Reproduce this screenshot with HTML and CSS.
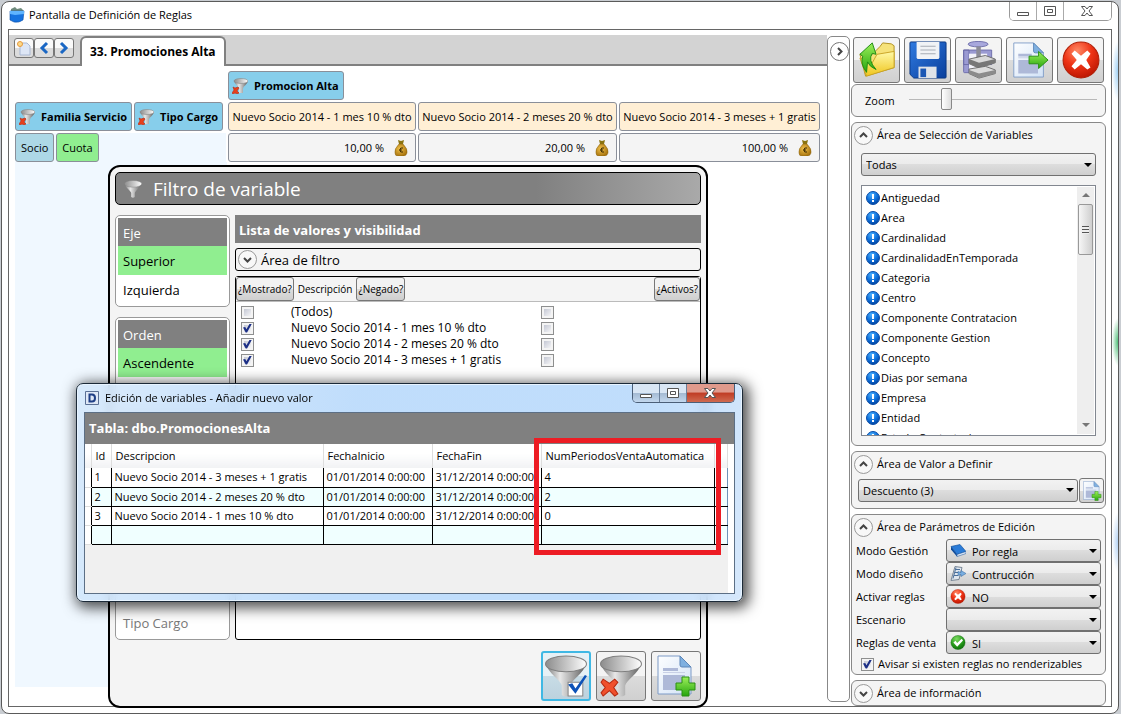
FILE: index.html
```html
<!DOCTYPE html>
<html lang="es">
<head>
  <meta charset="UTF-8">
  <title>Pantalla de Definición de Reglas</title>
  <link rel="stylesheet" href="styles.css">
</head>
<body>
  <!-- shared icons -->
  <svg class="defs" width="0" height="0" aria-hidden="true">
    <defs>
      <linearGradient id="steel" x1="0" x2="1" y1="0" y2="0">
        <stop offset="0" stop-color="#777"/><stop offset=".35" stop-color="#e8e8e8"/>
        <stop offset=".6" stop-color="#b4b4b4"/><stop offset="1" stop-color="#5c5c5c"/>
      </linearGradient>
      <linearGradient id="bowl" x1="0" x2="1" y1="0" y2="0">
        <stop offset="0" stop-color="#8c8c8c"/><stop offset=".6" stop-color="#cfcfcf"/><stop offset="1" stop-color="#fff"/>
      </linearGradient>
      <linearGradient id="blue" x1="0" x2="1" y1="0" y2="1">
        <stop offset="0" stop-color="#2f7ae0"/><stop offset="1" stop-color="#0a3f9c"/>
      </linearGradient>
      <linearGradient id="folder" x1="0" x2="0" y1="0" y2="1">
        <stop offset="0" stop-color="#fff9a8"/><stop offset="1" stop-color="#efc51c"/>
      </linearGradient>
      <linearGradient id="green" x1="0" x2="0" y1="0" y2="1">
        <stop offset="0" stop-color="#9cf05a"/><stop offset="1" stop-color="#27a50d"/>
      </linearGradient>
      <linearGradient id="paper" x1="0" x2="1" y1="0" y2="1">
        <stop offset="0" stop-color="#fdfeff"/><stop offset="1" stop-color="#d2e2f6"/>
      </linearGradient>
      <radialGradient id="red" cx=".4" cy=".25" r=".8">
        <stop offset="0" stop-color="#ff8a66"/><stop offset=".5" stop-color="#ee3315"/><stop offset="1" stop-color="#b81400"/>
      </radialGradient>
      <radialGradient id="ball" cx=".4" cy=".25" r=".8">
        <stop offset="0" stop-color="#4ab0ff"/><stop offset=".6" stop-color="#0a6ad6"/><stop offset="1" stop-color="#043f96"/>
      </radialGradient>
      <radialGradient id="okball" cx=".4" cy=".25" r=".8">
        <stop offset="0" stop-color="#7edc62"/><stop offset=".6" stop-color="#25981a"/><stop offset="1" stop-color="#0c6a08"/>
      </radialGradient>
      <radialGradient id="gold" cx=".4" cy=".4" r=".7">
        <stop offset="0" stop-color="#f0c04a"/><stop offset="1" stop-color="#a06c08"/>
      </radialGradient>
    </defs>

    <symbol id="i-funnel" viewBox="0 0 40 40">
      <path d="M1 9C3 17 15 24 16 29v9q4 3 8 0v-9c1-5 13-12 15-20z" fill="url(#steel)"/>
      <ellipse cx="20" cy="8.500" rx="19.500" ry="7.500" fill="url(#bowl)" stroke="#808080"/>
    </symbol>
    <symbol id="i-cross" viewBox="0 0 18 18">
      <path d="M3 1l6 4 5-4 3 3-4 5 4 6-3 2-5-5-6 5-2-3 4-5-4-5z" fill="#f0502c" stroke="#b62a10"/>
    </symbol>
    <symbol id="i-funnel-x" viewBox="0 0 40 40">
      <use href="#i-funnel"/>
      <use href="#i-cross" x="0" y="22" width="18" height="18"/>
    </symbol>
    <symbol id="i-funnel-x-small" viewBox="0 0 16 16">
      <path d="M2 3c1 4 5 5 5 8v4h4v-4c0-3 4-4 5-8z" fill="url(#steel)"/>
      <ellipse cx="9" cy="3" rx="7" ry="2.500" fill="url(#bowl)" stroke="#888" stroke-width=".6"/>
      <path d="M1 9l2 1 3-1 1 1-2 3 2 2-2 1-2-1-2 1-1-1 2-3z" fill="#e8401c" stroke="#b62a10" stroke-width=".6"/>
    </symbol>
    <symbol id="i-funnel-ok" viewBox="0 0 40 40">
      <use href="#i-funnel"/>
      <path d="M22 26h14v13H22z" fill="#fff" stroke="#888"/>
      <path d="M22 28l4-1 3 5L38 19l2 1-11 17z" fill="#0c52b8"/>
    </symbol>
    <symbol id="i-page" viewBox="0 0 36 40">
      <path d="M1 1h22l11 11v27H1z" fill="url(#paper)" stroke="#7c9ac6"/>
      <path d="M23 1v9q0 2 2 2h9z" fill="#7fb0e0" stroke="#5d86b8"/>
      <path d="M6 13h15v3H6zM6 20h22v15H6z" fill="#aeb9d8"/>
      <path d="M6 17h22v1H6z" fill="#c8d0e6"/>
    </symbol>
    <symbol id="i-page-add" viewBox="0 0 40 42">
      <use href="#i-page" x="1" y="0" width="36" height="40"/>
      <path d="M26 22h7v6h6v7h-6v6h-7v-6h-6v-7h6z" fill="url(#green)" stroke="#2a8f12"/>
    </symbol>
    <symbol id="i-page-go" viewBox="0 0 38 40">
      <use href="#i-page" x="1" y="0" width="34" height="40"/>
      <path d="M18 16h10v-5l10 9-10 9v-5H18z" fill="url(#green)" stroke="#2a8f12"/>
    </symbol>
    <symbol id="i-folder" viewBox="0 0 40 38">
      <path d="M2 13l10-3 2 4 9-9 3-4 9 1 3 2v23l-30 9z" fill="#f6e27a" stroke="#b09020"/>
      <path d="M2 17l7 19 29-9V10L20 13l-5 9z" fill="url(#folder)" stroke="#c9a325"/>
      <path d="M9 32q-7-9-4-17l-3-2L15 1l4 12-4-1q-5 7 4 17-7-3-9-8z" fill="url(#green)" stroke="#1e8a12"/>
    </symbol>
    <symbol id="i-save" viewBox="0 0 40 40">
      <path d="M2 1h36q1 0 1 1v36q0 1-1 1H5l-4-4V2q0-1 1-1z" fill="url(#blue)" stroke="#0a3782"/>
      <path d="M8 1h24v16q0 2-2 2H10q-2 0-2-2z" fill="#f1f3f6"/>
      <path d="M12 5h16v1H12zM12 9h16v1H12zM12 13h16v1H12z" fill="#a8adb5"/>
      <path d="M10 27h19v12H10z" fill="#dfe3e8"/>
      <path d="M12 29h6v9h-6z" fill="#1b57b4"/>
    </symbol>
    <symbol id="i-press" viewBox="0 0 38 42">
      <path d="M2 10h6v25H3q-1 0-1-1zM2 10h31v16H2z" fill="#9a9ad2" stroke="#6a6aa8"/>
      <path d="M8 14h20v18H8z" fill="#f3f3fa"/>
      <ellipse cx="18" cy="3.500" rx="11" ry="3" fill="#a8a8dc" stroke="#6a6aa8"/>
      <path d="M16 6h5v14h-5z" fill="#8c8c98"/>
      <path d="M8 20l18-4 11 4v4l-18 6-11-5z" fill="#d9d9d9" stroke="#666"/>
      <path d="M8 20l11 4 18-4v4l-18 6-11-5z" fill="#777"/>
      <path d="M8 31l18-3 11 4v4l-18 5-11-5z" fill="#dcdcdc" stroke="#666"/>
      <path d="M8 32l11 4 18-4v4l-18 5-11-5z" fill="#8b8b8b"/>
    </symbol>
    <symbol id="i-stop" viewBox="0 0 36 36">
      <circle cx="18" cy="18" r="17" fill="url(#red)" stroke="#b02008"/>
      <path d="M12 9l6 5 6-5 3 3-4 6 4 7-3 2-6-5-6 5-3-3 5-6-5-6z" fill="#fff"/>
    </symbol>
    <symbol id="i-ok" viewBox="0 0 36 36">
      <circle cx="18" cy="18" r="17" fill="url(#okball)" stroke="#0d6a0a"/>
      <path d="M7 18l5-4 4 5L27 9l3 4-14 15z" fill="#fff"/>
    </symbol>
    <symbol id="i-info" viewBox="0 0 14 14">
      <circle cx="7" cy="7" r="6.500" fill="url(#ball)" stroke="#0a4ea8"/>
      <path d="M6 3h2v5H6zM6 9h2v2H6z" fill="#fff"/>
    </symbol>
    <symbol id="i-bag" viewBox="0 0 14 16">
      <path d="M4 0l3 1 3-1-1 4H5z" fill="#8a7410"/>
      <path d="M5 4h4q5 5 4 9-1 3-3 3H4q-3 0-3-3Q0 9 5 4z" fill="url(#gold)" stroke="#8b6410" stroke-width=".5"/>
      <path d="M9 8q-3-1-3 2t3 2M5 10h3" fill="none" stroke="#3c2a00"/>
    </symbol>
    <symbol id="i-up" viewBox="0 0 19 19">
      <circle cx="9.500" cy="9.500" r="9" fill="#f8f8f8" stroke="#999"/>
      <path d="M6 11l3.500-3.500L13 11" fill="none" stroke="#444" stroke-width="2"/>
    </symbol>
    <symbol id="i-down" viewBox="0 0 19 19">
      <circle cx="9.500" cy="9.500" r="9" fill="#f8f8f8" stroke="#999"/>
      <path d="M6 8l3.500 3.500L13 8" fill="none" stroke="#444" stroke-width="2"/>
    </symbol>
    <symbol id="i-right" viewBox="0 0 19 19">
      <circle cx="9.500" cy="9.500" r="9" fill="#fff" stroke="#777"/>
      <path d="M8 6l3.500 3.500L8 13" fill="none" stroke="#444" stroke-width="2"/>
    </symbol>
    <symbol id="i-book" viewBox="0 0 16 14">
      <path d="M1 3l9-2 6 7-9 3z" fill="#2b7cd8" stroke="#0d4b96" stroke-width=".6"/>
      <path d="M1 3v3l6 7v-2z" fill="#0c4a9c"/>
      <path d="M7 11l9-3v2l-9 3z" fill="#e5eefa" stroke="#0d4b96" stroke-width=".5"/>
    </symbol>
    <symbol id="i-design" viewBox="0 0 16 14">
      <path d="M5 0l7 1-3 12-8 1z" fill="#dfe6ee" stroke="#7a8796"/>
      <path d="M6 3h4M5 6h4M4 9h4M6 1L3 12" stroke="#4b6f9a" fill="none"/>
      <path d="M8 5l3 1V4l5 3-5 3V8L8 9z" fill="#79aee0" stroke="#35679c" stroke-width=".5"/>
    </symbol>
    <symbol id="i-min" viewBox="0 0 14 12"><path d="M1.500 7.500h11v3h-11z" fill="#fff" stroke="#555"/></symbol>
    <symbol id="i-max" viewBox="0 0 14 12"><path d="M1.500 1.500h11v9h-11z" fill="#fff" stroke="#555"/><path d="M4.500 4.500h5v3h-5z" fill="#fff" stroke="#555"/></symbol>
    <symbol id="i-close" viewBox="0 0 14 12"><path d="M1.500 1.500h3.500l2 2.500 2-2.500h3.500L9 6l3.500 4.500H9L7 8l-2 2.500H1.500L5 6z" fill="#fff" stroke="#555"/></symbol>
  </svg>

  <div class="window">
    <header class="titlebar">
      <svg class="app-icon" viewBox="0 0 16 16">
        <path d="M2 2l4-2 2 2 4-1 3 3H2z" fill="#6f8a7c"/>
        <path d="M1 4h14l-1 9q-4 3-9 2l-4-2z" fill="#1673e0" stroke="#0a4da6" stroke-width=".6"/>
        <path d="M1 4h14v3l-9 1-5-1z" fill="#5fb4ff"/>
      </svg>
      <h1>Pantalla de Definición de Reglas</h1>
      <div class="caption">
        <button aria-label="Minimizar"><svg><use href="#i-min"/></svg></button>
        <button aria-label="Maximizar"><svg><use href="#i-max"/></svg></button>
        <button class="wide" aria-label="Cerrar"><svg><use href="#i-close"/></svg></button>
      </div>
    </header>

    <div class="content">
      <main class="main">
        <nav class="tabs">
          <div class="tab-buttons">
            <button aria-label="Nueva"><svg viewBox="0 0 16 16"><path d="M4 3h7l3 3v9H4z" fill="#dde6f6" stroke="#a9b8d4"/><circle cx="4" cy="4" r="2.500" fill="#fbd98a" stroke="#e89a3c"/></svg></button>
            <button aria-label="Anterior"><svg viewBox="0 0 16 16"><path d="M11 3L6 8l5 5" fill="none" stroke="#1a67c4" stroke-width="3"/></svg></button>
            <button aria-label="Siguiente"><svg viewBox="0 0 16 16"><path d="M5 3l5 5-5 5" fill="none" stroke="#1a67c4" stroke-width="3"/></svg></button>
          </div>
          <a class="tab" href="#">33. Promociones Alta</a>
        </nav>

        <div class="sheet">
          <div class="matrix">
            <div></div>
            <div class="group"><button class="var"><svg><use href="#i-funnel-x-small"/></svg>Promocion Alta</button></div>
            <div class="group"><button class="var">
              <svg><use href="#i-funnel-x-small"/></svg>Familia Servicio</button><button class="var">
              <svg><use href="#i-funnel-x-small"/></svg>Tipo Cargo</button></div>
            <div class="cell head">Nuevo Socio 2014 - 1 mes 10 % dto</div>
            <div class="cell head">Nuevo Socio 2014 - 2 meses 20 % dto</div>
            <div class="cell head">Nuevo Socio 2014 - 3 meses + 1 gratis</div>
            <div class="group axis"><span class="cell socio">Socio</span><span class="cell cuota">Cuota</span></div>
            <div class="cell value">10,00 % <svg><use href="#i-bag"/></svg></div>
            <div class="cell value">20,00 % <svg><use href="#i-bag"/></svg></div>
            <div class="cell value">100,00 % <svg><use href="#i-bag"/></svg></div>
          </div>
          <div class="left-axis"></div>
        </div>
      </main>

      <div class="splitter"><button aria-label="Ocultar panel"><svg><use href="#i-right"/></svg></button></div>

      <aside class="side">
        <div class="toolbar">
          <button class="tool" aria-label="Abrir"><svg><use href="#i-folder"/></svg></button>
          <button class="tool" aria-label="Guardar"><svg><use href="#i-save"/></svg></button>
          <button class="tool" aria-label="Compilar"><svg><use href="#i-press"/></svg></button>
          <button class="tool" aria-label="Exportar"><svg><use href="#i-page-go"/></svg></button>
          <button class="tool" aria-label="Salir"><svg><use href="#i-stop"/></svg></button>
        </div>

        <section class="box zoom">
          <label for="zoom">Zoom</label>
          <input type="range" id="zoom" min="0" max="100" value="18">
        </section>

        <section class="box variables">
          <h2><svg><use href="#i-up"/></svg>Área de Selección de Variables</h2>
          <div class="combo">
            <select aria-label="Variables"><option>Todas</option></select>
          </div>
          <div class="list">
            <ul>
              <li><svg><use href="#i-info"/></svg>Antiguedad</li>
              <li><svg><use href="#i-info"/></svg>Area</li>
              <li><svg><use href="#i-info"/></svg>Cardinalidad</li>
              <li><svg><use href="#i-info"/></svg>CardinalidadEnTemporada</li>
              <li><svg><use href="#i-info"/></svg>Categoria</li>
              <li><svg><use href="#i-info"/></svg>Centro</li>
              <li><svg><use href="#i-info"/></svg>Componente Contratacion</li>
              <li><svg><use href="#i-info"/></svg>Componente Gestion</li>
              <li><svg><use href="#i-info"/></svg>Concepto</li>
              <li><svg><use href="#i-info"/></svg>Dias por semana</li>
              <li><svg><use href="#i-info"/></svg>Empresa</li>
              <li><svg><use href="#i-info"/></svg>Entidad</li>
              <li><svg><use href="#i-info"/></svg>Estado Contratacion</li>
            </ul>
            <div class="scroll">
              <i class="arrow up"></i>
              <i class="thumb"></i>
              <i class="arrow down"></i>
            </div>
          </div>
        </section>

        <section class="box valor">
          <h2><svg><use href="#i-up"/></svg>Área de Valor a Definir</h2>
          <div class="valor-row">
            <div class="combo">
              <select aria-label="Valor"><option>Descuento (3)</option></select>
            </div>
            <button class="tool small" aria-label="Añadir valor"><svg><use href="#i-page-add"/></svg></button>
          </div>
        </section>

        <section class="box params">
          <h2><svg><use href="#i-up"/></svg>Área de Parámetros de Edición</h2>
          <div class="param-grid">
            <label for="gestion">Modo Gestión</label>
            <div class="combo icon"><svg><use href="#i-book"/></svg><select id="gestion"><option>Por regla</option></select></div>
            <label for="diseno">Modo diseño</label>
            <div class="combo icon"><svg><use href="#i-design"/></svg><select id="diseno"><option>Contrucción</option></select></div>
            <label for="activar">Activar reglas</label>
            <div class="combo icon"><svg><use href="#i-stop"/></svg><select id="activar"><option>NO</option></select></div>
            <label for="escenario">Escenario</label>
            <div class="combo"><select id="escenario"><option></option></select></div>
            <label for="venta">Reglas de venta</label>
            <div class="combo icon"><svg><use href="#i-ok"/></svg><select id="venta"><option>SI</option></select></div>
          </div>
          <label class="avisar"><input type="checkbox" checked>Avisar si existen reglas no renderizables</label>
        </section>

        <section class="box info">
          <h2><svg><use href="#i-down"/></svg>Área de información</h2>
        </section>
      </aside>
    </div>
  </div>

  <!-- filter dialog -->
  <div class="filter">
    <h2 class="filter-title"><svg><use href="#i-funnel"/></svg>Filtro de variable</h2>
    <div class="filter-body">
      <div class="options">
        <ul>
          <li class="title">Eje</li>
          <li class="on">Superior</li>
          <li>Izquierda</li>
        </ul>
        <ul>
          <li class="title">Orden</li>
          <li class="on">Ascendente</li>
          <li></li>
        </ul>
        <ul class="rest">
          <li class="off">Tipo Cargo</li>
        </ul>
      </div>
      <div class="values">
        <h3>Lista de valores y visibilidad</h3>
        <div class="expander"><svg><use href="#i-down"/></svg>Área de filtro</div>
        <div class="value-list">
          <div class="value-head">
            <button>¿Mostrado?</button><span>Descripción</span><button>¿Negado?</button><button class="last">¿Activos?</button>
          </div>
          <div class="value-rows">
            <input type="checkbox" id="v0"><label for="v0">(Todos)</label><input type="checkbox" aria-label="Negado todos">
            <input type="checkbox" id="v1" checked><label for="v1">Nuevo Socio 2014 - 1 mes 10 % dto</label><input type="checkbox" aria-label="Negado 1">
            <input type="checkbox" id="v2" checked><label for="v2">Nuevo Socio 2014 - 2 meses 20 % dto</label><input type="checkbox" aria-label="Negado 2">
            <input type="checkbox" id="v3" checked><label for="v3">Nuevo Socio 2014 - 3 meses + 1 gratis</label><input type="checkbox" aria-label="Negado 3">
          </div>
        </div>
      </div>
    </div>
    <div class="filter-actions">
      <button class="tool focus" aria-label="Aplicar filtro"><svg><use href="#i-funnel-ok"/></svg></button>
      <button class="tool" aria-label="Quitar filtro"><svg><use href="#i-funnel-x"/></svg></button>
      <button class="tool" aria-label="Añadir valor"><svg><use href="#i-page-add"/></svg></button>
    </div>
  </div>

  <!-- value editor -->
  <div class="editor">
    <header class="editor-title">
      <svg viewBox="0 0 14 14"><path d="M.500.500h13v13H.500z" fill="#dfe8f6" stroke="#5b7095"/><path d="M4.500 3.500H7q3 0 3 3.500T7 10.500H4.500z" fill="none" stroke="#1f3f86" stroke-width="2"/></svg>
      <h2>Edición de variables - Añadir nuevo valor</h2>
      <div class="caption aero">
        <button aria-label="Minimizar"><svg><use href="#i-min"/></svg></button>
        <button aria-label="Maximizar"><svg><use href="#i-max"/></svg></button>
        <button class="wide close" aria-label="Cerrar"><svg><use href="#i-close"/></svg></button>
      </div>
    </header>
    <div class="editor-body">
      <h3>Tabla: dbo.PromocionesAlta</h3>
      <div class="table-wrap">
        <table>
          <colgroup><col class="c-mark"><col class="c-id"><col class="c-desc"><col class="c-date"><col class="c-date"><col class="c-num"><col></colgroup>
          <thead>
            <tr><th></th><th>Id</th><th>Descripcion</th><th>FechaInicio</th><th>FechaFin</th><th>NumPeriodosVentaAutomatica</th><th></th></tr>
          </thead>
          <tbody>
            <tr><td></td><td>1</td><td>Nuevo Socio 2014 - 3 meses + 1 gratis</td><td>01/01/2014 0:00:00</td><td>31/12/2014 0:00:00</td><td>4</td><td></td></tr>
            <tr><td></td><td>2</td><td>Nuevo Socio 2014 - 2 meses 20 % dto</td><td>01/01/2014 0:00:00</td><td>31/12/2014 0:00:00</td><td>2</td><td></td></tr>
            <tr><td></td><td>3</td><td>Nuevo Socio 2014 - 1 mes 10 % dto</td><td>01/01/2014 0:00:00</td><td>31/12/2014 0:00:00</td><td>0</td><td></td></tr>
            <tr><td></td><td></td><td></td><td></td><td></td><td></td><td></td></tr>
          </tbody>
        </table>
      </div>
    </div>
    <div class="mark"></div>
  </div>
</body>
</html>
```
FILE: styles.css
```css
* {
  box-sizing: border-box;
}

body {
  position: relative;
  display: flex;
  margin: 0;
  min-height: 100vh;
  padding: 1px 2px 0 1px;
  overflow: hidden;
  background: #c9cdd2;
  font-family: "Open Sans", "Noto Sans", sans-serif;
  font-size: 11px;
  line-height: 16px;
  color: #000;
}

h1, h2, h3, ul {
  margin: 0;
  padding: 0;
  font-size: 11px;
  font-weight: normal;
  list-style: none;
}

button, select, input {
  margin: 0;
  padding: 0;
  font: inherit;
  color: inherit;
}

svg {
  flex: none;
  display: block;
}

.defs {
  position: absolute;
}

/* main window */
.window {
  flex: 1;
  display: flex;
  flex-direction: column;
  min-width: 0;
  padding: 0 6px 6px;
  border: 1px solid #5a5a5a;
  border-radius: 8px;
  background:
    radial-gradient(6px 30px at 100% 69px, #9fd0f4, transparent),
    radial-gradient(6px 24px at 100% 340px, #4fbf78, transparent),
    radial-gradient(6px 30px at 100% 540px, #b4d2f4, transparent),
    #fff;
}

.titlebar {
  display: flex;
  align-items: flex-start;
  height: 27px;
}

.app-icon {
  width: 16px;
  height: 16px;
  margin: 5px 4px 0 1px;
}

.titlebar h1 {
  flex: 1;
  line-height: 26px;
}

.caption {
  display: flex;
  border: 1px solid #9a9a9a;
  border-top: 0;
  border-radius: 0 0 5px 5px;
  overflow: hidden;
}

.caption button {
  width: 27px;
  height: 18px;
  padding: 3px 6px;
  border: 0;
  border-right: 1px solid #aaa;
  background: #fff;
}

.caption svg {
  width: 14px;
  height: 12px;
}

.caption .wide {
  width: 47px;
  padding: 3px 16px;
  border-right: 0;
}

.content {
  flex: 1;
  display: flex;
  border: 1px solid #666;
  background: #fff;
}

/* tabs and matrix */
.main {
  flex: 1;
  display: flex;
  flex-direction: column;
  min-width: 0;
  padding-top: 5px;
}

.tabs {
  display: flex;
  height: 31px;
  padding-left: 5px;
  border-bottom: 2px solid #808080;
  background: #d3d3d3;
}

.tab-buttons {
  display: flex;
  width: 66px;
  padding-top: 3px;
}

.tab-buttons button {
  width: 20px;
  height: 20px;
  padding: 1px;
  border: 1px solid #777;
  border-radius: 3px;
  background: linear-gradient(#fafafa 50%, #dcdcdc 50%);
}

.tab-buttons svg {
  width: 16px;
  height: 16px;
}

.tab {
  height: 30px;
  margin-top: 1px;
  padding: 0 8px;
  border: 2px solid #808080;
  border-bottom: 0;
  border-radius: 6px 6px 0 0;
  background: #fff;
  font-size: 12px;
  font-weight: bold;
  line-height: 27px;
  color: #000;
  text-decoration: none;
}

.sheet {
  flex: 1;
  display: flex;
  flex-direction: column;
  padding: 5px 7px 19px 6px;
}

.matrix {
  display: grid;
  grid-template-columns: 211px 188fr 199fr 201fr;
  gap: 2px;
}

.matrix > :nth-child(2) {
  grid-column: 2 / 5;
}

.group {
  display: flex;
  gap: 2px;
}

.axis {
  background: #f0f8ff;
}

.var,
.cell {
  display: flex;
  align-items: center;
  min-width: 0;
  height: 29px;
  padding: 0 5px;
  border: 1px solid #8a8f99;
  border-radius: 3px;
  white-space: nowrap;
}

.var {
  gap: 6px;
  padding: 0 4px 0 3px;
  background: #87ceeb;
  font-weight: bold;
}

.var svg {
  width: 16px;
  height: 16px;
}

.head {
  justify-content: center;
  padding: 0 2px;
  background: #ffefd5;
}

.value {
  justify-content: flex-end;
  gap: 10px;
  padding-right: 7px;
  background: #f4f4f4;
}

.value svg {
  width: 14px;
  height: 16px;
}

.socio {
  background: #add8e6;
}

.cuota {
  background: #90ee90;
}

.left-axis {
  flex: 1;
  width: 212px;
  background: #f0f8ff;
}

.splitter {
  width: 23px;
  margin: 6px 1px 4px 0;
  border: 1px solid #888;
  border-radius: 5px;
}

.splitter button {
  display: block;
  margin: 5px 0 0 2px;
  border: 0;
  background: none;
}

.splitter svg,
.box h2 svg,
.expander svg {
  width: 19px;
  height: 19px;
}

/* side panel */
.side {
  display: flex;
  flex-direction: column;
  gap: 5px;
  width: 255px;
  margin: 7px 5px 0 0;
}

.toolbar {
  display: flex;
  gap: 4px;
  margin: 0 0 -4px 2px;
}

.tool {
  display: flex;
  align-items: center;
  justify-content: center;
  width: 47px;
  height: 46px;
  border: 1px solid #777;
  border-radius: 3px;
  background: linear-gradient(#f4f4f4 50%, #dcdcdc 50%, #d0d0d0);
}

.tool svg {
  width: 38px;
  height: 38px;
}

.box {
  border: 1px solid #888;
  border-radius: 6px;
  background: #f4f4f4;
}

.box h2 {
  display: flex;
  align-items: center;
  gap: 4px;
  height: 24px;
  padding-left: 2px;
}

.zoom {
  display: flex;
  gap: 14px;
  height: 33px;
  padding: 0 8px 0 13px;
  line-height: 32px;
}

.zoom input {
  flex: 1;
  min-width: 0;
  height: 28px;
  appearance: none;
  background: linear-gradient(#b8b8b8, #b8b8b8) center / 100% 1px no-repeat;
}

.zoom input::-webkit-slider-thumb {
  appearance: none;
  width: 11px;
  height: 22px;
  border: 1px solid #888;
  border-radius: 2px;
  background: linear-gradient(90deg, #fff, #ddd);
}

.variables {
  flex: 1;
  display: flex;
  flex-direction: column;
  padding: 0 9px 9px;
}

.variables h2 {
  margin-left: -9px;
}

.combo {
  position: relative;
  min-width: 0;
}

.combo::after {
  content: "";
  position: absolute;
  top: 10px;
  right: 4px;
  border: 4px solid transparent;
  border-top-color: #000;
  border-bottom: 0;
}

.combo select {
  display: block;
  width: 100%;
  height: 23px;
  padding-left: 4px;
  border: 1px solid #707070;
  border-radius: 3px;
  appearance: none;
  background: linear-gradient(#f2f2f2, #ebebeb 50%, #dddddd 50%, #cfcfcf);
}

.combo.icon select {
  padding-left: 25px;
}

.combo.icon svg {
  position: absolute;
  top: 4px;
  left: 4px;
  width: 16px;
  height: 15px;
}

.variables .combo {
  margin-top: 6px;
}

.list {
  flex: 1 1 0;
  display: flex;
  min-height: 0;
  margin-top: 9px;
  padding: 1px;
  border: 1px solid #828790;
  background: #fff;
  overflow: hidden;
}

.list ul {
  flex: 1;
  padding: 1px 0 0 3px;
}

.list li {
  display: flex;
  align-items: center;
  gap: 1px;
  height: 20px;
}

.list svg {
  width: 14px;
  height: 14px;
}

.scroll {
  display: flex;
  flex-direction: column;
  width: 17px;
  background: #eee;
}

.arrow {
  margin: 6px auto 7px;
  border: 4px solid transparent;
}

.arrow.up {
  border-top: 0;
  border-bottom-color: #777;
}

.arrow.down {
  margin-top: auto;
  border-bottom: 0;
  border-top-color: #777;
}

.thumb {
  height: 51px;
  margin: 0 1px;
  border: 1px solid #999;
  border-radius: 2px;
  background:
    repeating-linear-gradient(#555 0 1px, #eee 1px 3px) center / 7px 8px no-repeat,
    linear-gradient(90deg, #f6f6f6, #cfcfcf);
}

.valor-row {
  display: flex;
  gap: 1px;
  padding: 2px 1px 5px 6px;
}

.valor-row .combo {
  flex: 1;
  padding-top: 1px;
}

.tool.small {
  width: 25px;
  height: 25px;
}

.tool.small svg {
  width: 20px;
  height: 20px;
}

.param-grid {
  display: grid;
  grid-template-columns: 90px 1fr;
  padding: 0 4px;
  line-height: 23px;
}

.avisar {
  display: flex;
  align-items: center;
  gap: 4px;
  height: 20px;
  padding-left: 9px;
}

input[type="checkbox"] {
  flex: none;
  width: 13px;
  height: 13px;
  border: 1px solid #8e8f8f;
  appearance: none;
  background: linear-gradient(135deg, #c4c8d4, #f4f4f6) center / 7px 7px no-repeat #f4f4f4;
}

input[type="checkbox"]:checked::before {
  content: "";
  display: block;
  width: 9px;
  height: 9px;
  margin: 1px;
  background: #1c2f86;
  clip-path: polygon(0 45%, 25% 40%, 38% 65%, 75% 0, 100% 0, 45% 100%, 30% 100%);
}

/* filter dialog */
.filter {
  position: absolute;
  top: 165px;
  left: 108px;
  display: flex;
  flex-direction: column;
  width: 600px;
  height: 543px;
  padding: 5px;
  border: 2px solid #000;
  border-radius: 12px;
  background: #f4f4f4;
}

.filter-title {
  display: flex;
  align-items: center;
  gap: 11px;
  height: 33px;
  padding-left: 8px;
  border: 1px solid #000;
  border-radius: 5px;
  background: linear-gradient(90deg, #808080 72%, #a9a9a9);
  font-size: 19px;
  color: #fff;
}

.filter-title svg {
  width: 18px;
  height: 18px;
}

.filter-body {
  flex: 1;
  display: flex;
  gap: 5px;
  margin-top: 10px;
  font-size: 13px;
}

.options {
  display: flex;
  flex-direction: column;
  gap: 10px;
  width: 115px;
}

.options ul {
  padding: 2px;
  border: 1px solid #999;
  border-radius: 5px;
  background: #fff;
  font-size: 13px;
}

.options li {
  height: 29px;
  padding-left: 5px;
  line-height: 30px;
}

.options .title {
  height: 28px;
  background: #808080;
  color: #fff;
}

.options .on {
  background: #90ee90;
}

.options .rest {
  flex: 1;
  display: flex;
  flex-direction: column;
  justify-content: flex-end;
}

.options .off {
  color: #777;
}

.values {
  flex: 1;
  display: flex;
  flex-direction: column;
  gap: 5px;
}

.values h3,
.editor-body h3 {
  height: 28px;
  padding-left: 4px;
  background: #808080;
  font-size: 13px;
  font-weight: bold;
  line-height: 30px;
  color: #fff;
}

.expander {
  display: flex;
  align-items: center;
  gap: 4px;
  height: 23px;
  padding-left: 2px;
  border: 1px solid #000;
  border-radius: 3px;
}

.value-list {
  flex: 1;
  border: 1px solid #000;
  border-radius: 3px;
  background: #fff;
  font-size: 12px;
}

.value-head {
  display: flex;
  align-items: center;
  gap: 4px;
  height: 25px;
  border-bottom: 1px solid #bbb;
  background: #f4f4f4;
  font-size: 10px;
}

.value-head button {
  height: 24px;
  padding: 0 1px;
  border: 1px solid #777;
  border-radius: 3px;
  background: linear-gradient(#f2f2f2 50%, #dddddd 50%, #cfcfcf);
}

.value-head .last {
  margin-left: auto;
}

.value-rows {
  display: grid;
  grid-template-columns: 50px 250px 13px;
  align-items: center;
  padding: 2px 5px;
}

.filter-actions {
  display: flex;
  justify-content: flex-end;
  gap: 5px;
  margin: 11px 0 0;
}

.filter-actions .tool {
  width: 50px;
  height: 50px;
}

.filter-actions svg {
  width: 42px;
  height: 42px;
}

.filter-actions .focus {
  border: 2px solid #3fb8e4;
  background: linear-gradient(#e6f1f6 50%, #c8dce6 50%, #bcd2de);
}

/* value editor */
.editor {
  position: absolute;
  top: 383px;
  left: 76px;
  display: flex;
  flex-direction: column;
  width: 667px;
  height: 219px;
  padding: 0 7px 7px;
  border: 1px solid #1c2a38;
  border-radius: 7px;
  background: linear-gradient(100deg, #d5e8fbdd, #b6d8fbdd 40%, #b6d8fbdd 80%, #cfe4fbdd);
  box-shadow: inset 0 0 0 1px #e8f4ff, 3px 3px 14px 3px #000000b0;
  backdrop-filter: blur(4px);
}

.editor-title {
  display: flex;
  align-items: flex-start;
  height: 28px;
}

.editor-title > svg {
  width: 14px;
  height: 14px;
  margin: 7px 6px 0 1px;
}

.editor-title h2 {
  flex: 1;
  line-height: 28px;
}

.aero {
  border-color: #4b5f78;
}

.aero button {
  border-color: #6a7f9a;
  background: linear-gradient(#d9e6f4 50%, #a3b9d2 50%, #c3d8ee);
}

.aero .close {
  background: linear-gradient(#e09a8c 45%, #c03c24 50%, #cf6a50);
}

.editor-body {
  flex: 1;
  display: flex;
  flex-direction: column;
  border: 1px solid #5c6f85;
  background: #f0f0f0;
}

.editor-body h3 {
  height: 31px;
}

.table-wrap {
  flex: 1;
  border-right: 6px solid #fff;
}

table {
  width: 100%;
  border-collapse: collapse;
  table-layout: fixed;
}

.c-mark { width: 6px; }
.c-id { width: 20px; }
.c-desc { width: 212px; }
.c-date { width: 109px; }
.c-num { width: 173px; }

th {
  height: 24px;
  padding: 0 4px;
  border-right: 1px solid #ddd;
  background: linear-gradient(#fff 40%, #f1f2f4);
  font-weight: normal;
  text-align: left;
}

td {
  height: 19px;
  padding: 0 3px;
  border: 1px solid #000;
  border-width: 0 1px 1px 0;
  background: #fff;
  line-height: 18px;
  white-space: nowrap;
  overflow: hidden;
}

th:first-child,
td:first-child {
  padding: 0;
  border-bottom-color: #ddd;
}

tbody tr:nth-child(even) td:not(:first-child) {
  background: #f0ffff;
}

td:last-child {
  border-right-color: #6f93b8;
}

.mark {
  position: absolute;
  top: 54px;
  left: 457px;
  width: 187px;
  height: 117px;
  border: 5px solid #ed1c24;
}
```
